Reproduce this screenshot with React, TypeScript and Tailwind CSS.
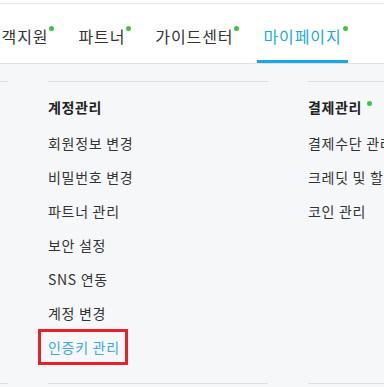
import React from 'react';

const TABS = [
  { label: '고객지원', active: false },
  { label: '파트너', active: false },
  { label: '가이드센터', active: false },
  { label: '마이페이지', active: true },
];

type Column = { title: string; dot?: boolean; items: { label: string; active?: boolean }[] };

const COLUMNS: Column[] = [
  { title: '', items: [] },
  {
    title: '계정관리',
    items: [
      { label: '회원정보 변경' },
      { label: '비밀번호 변경' },
      { label: '파트너 관리' },
      { label: '보안 설정' },
      { label: 'SNS 연동' },
      { label: '계정 변경' },
      { label: '인증키 관리', active: true },
    ],
  },
  {
    title: '결제관리',
    dot: true,
    items: [{ label: '결제수단 관리' }, { label: '크레딧 및 할인 관리' }, { label: '코인 관리' }],
  },
];

export default function App() {
  return (
    <div
      className="w-[384px] h-[387px] overflow-hidden bg-white"
      style={{ fontFamily: '"Noto Sans CJK KR", "Noto Sans", sans-serif' }}
    >
      <div className="mt-[3px] border-t border-[#e6e6e6]" />

      {/* Top nav */}
      <nav className="h-[60px] border-b border-[#e1e1e1] flex gap-[18px] ml-[-20px]">
        {TABS.map((tab) => (
          <div
            key={tab.label}
            className={`relative shrink-0 flex items-start pl-[6px] pt-[21px] ${
              tab.active ? 'border-b-[3px] border-[#16a9e9]' : ''
            }`}
          >
            <span
              className={`text-[16px] leading-[22px] tracking-[0.9px] whitespace-nowrap ${
                tab.active ? 'text-[#1ea6e4]' : 'text-[#333333]'
              }`}
            >
              {tab.label}
            </span>
            <span className="mt-[1px] ml-[1px] w-[5px] h-[5px] rounded-full bg-[#3fc43f]" />
          </div>
        ))}
      </nav>

      {/* Mega menu */}
      <div className="bg-[#f6f7f9] h-[323px] pt-[17px]">
        <div className="flex gap-[40px] ml-[-212px]">
          {COLUMNS.map((col, i) => (
            <div
              key={i}
              className="w-[220px] shrink-0 border-t border-b border-[#dcdde0] h-[303px] pt-[8px]"
            >
              {col.title && (
                <div className="flex items-start">
                  <span className="text-[14px] leading-[34px] tracking-[0.6px] font-bold text-[#222222] whitespace-nowrap">
                    {col.title}
                  </span>
                  {col.dot && (
                    <span className="mt-[11px] ml-[5px] w-[5px] h-[5px] rounded-full bg-[#3fc43f]" />
                  )}
                </div>
              )}
              <ul className="mt-[2px]">
                {col.items.map((item) => (
                  <li
                    key={item.label}
                    className={`relative text-[14px] leading-[34px] tracking-[0.7px] whitespace-nowrap ${
                      item.active ? 'text-[#3aa9e3]' : 'text-[#333333]'
                    }`}
                  >
                    {item.label}
                    {item.active && (
                      <span className="absolute left-[-10px] top-[-1px] w-[90px] h-[36px] border-[3px] border-[#e8202a]" />
                    )}
                  </li>
                ))}
              </ul>
            </div>
          ))}
        </div>
      </div>
    </div>
  );
}
